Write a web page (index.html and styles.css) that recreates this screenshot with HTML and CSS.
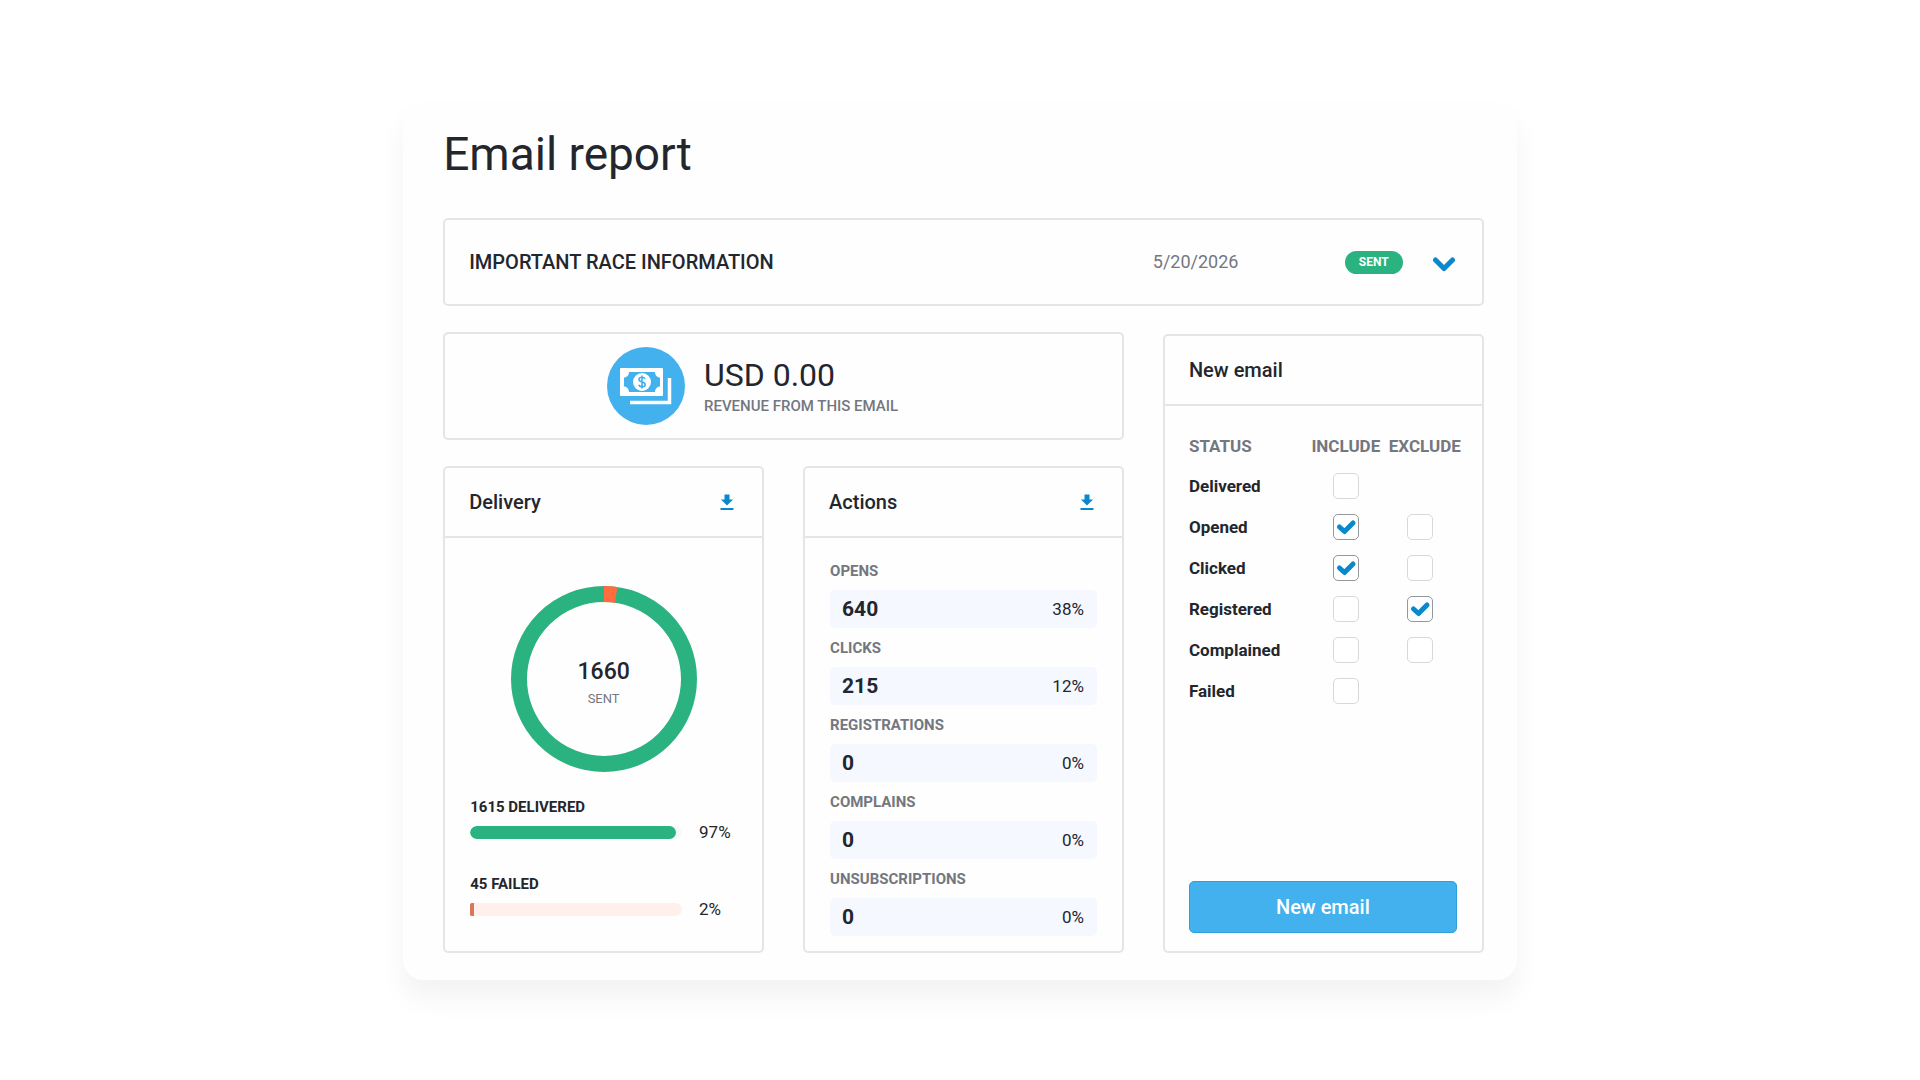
FILE: index.html
```html
<!DOCTYPE html>
<html lang="en">
<head>
<meta charset="utf-8">
<meta name="viewport" content="width=device-width, initial-scale=1">
<title>Email report</title>
<link rel="stylesheet" href="styles.css">
</head>
<body>
<svg class="defs" aria-hidden="true">
  <symbol id="download" viewBox="0 0 14 18">
    <path d="M4.5 1.5h5v5h3.6L7 12.6.9 6.500h3.600z"/>
    <path d="M.5 15h13v2H.5z"/>
  </symbol>
  <symbol id="tick" viewBox="0 0 26 26">
    <path d="M6.500 13l5 4.500 8.500-8.500" fill="none" stroke="currentColor" stroke-width="5" stroke-linecap="round" stroke-linejoin="round"/>
  </symbol>
</svg>
<main class="report">
  <h1 class="title">Email report</h1>
  <div class="grid">
    <section class="panel summary">
      <h2 class="subject">IMPORTANT RACE INFORMATION</h2>
      <time class="date" datetime="2026-05-20">5/20/2026</time>
      <span class="pill">SENT</span>
      <button class="icon-button" type="button" aria-label="Show details">
        <svg width="24" height="20" viewBox="0 0 24 20"><path d="M3.500 8L12 16.500l8.500-8.500" fill="none" stroke="currentColor" stroke-width="5" stroke-linecap="round" stroke-linejoin="round"/></svg>
      </button>
    </section>

    <section class="panel revenue">
      <svg class="money" width="78" height="78" viewBox="0 0 78 78" aria-hidden="true">
        <circle cx="39" cy="39" r="39" fill="#43b1ee"/>
        <rect x="13" y="21" width="43" height="28" rx="1" fill="#fff"/>
        <path d="M22 25h26c0 3 2 5.500 5 5.500v9c-3 0-5 2.500-5 5.500H22c0-3-2-5.500-5-5.500v-9c3 0 5-2.500 5-5.500z" fill="#43b1ee"/>
        <circle cx="35" cy="35" r="9" fill="#fff"/>
        <path d="M38 32c-.5-1.300-1.600-1.800-3-1.800-1.700 0-3 .8-3 2.200 0 3.200 6.200 1.800 6.200 5 0 1.500-1.400 2.400-3.200 2.400-1.600 0-2.800-.7-3.200-2M35 28.500v13" fill="none" stroke="#43b1ee" stroke-width="1.600"/>
        <path d="M62.500 31v24.500H23" fill="none" stroke="#fff" stroke-width="3.500"/>
      </svg>
      <div>
        <p class="amount">USD 0.00</p>
        <p class="caption">REVENUE FROM THIS EMAIL</p>
      </div>
    </section>

    <section class="panel delivery">
      <header class="head">
        <h2>Delivery</h2>
        <button class="icon-button" type="button" aria-label="Download delivery data"><svg width="14" height="18" fill="currentColor"><use href="#download"/></svg></button>
      </header>
      <div class="body">
        <div class="donut">
          <svg width="186" height="186" viewBox="0 0 186 186" aria-hidden="true">
            <circle cx="93" cy="93" r="85" fill="none" stroke="#2ab380" stroke-width="16"/>
            <circle cx="93" cy="93" r="85" fill="none" stroke="#ff6c40" stroke-width="16" pathLength="100" stroke-dasharray="2.300 97.700" transform="rotate(-90 93 93)"/>
          </svg>
          <div class="donut-text">
            <strong>1660</strong>
            <span>SENT</span>
          </div>
        </div>
        <div class="meter">
          <h3>1615 DELIVERED</h3>
          <div class="meter-row">
            <div class="track good"><div class="fill" style="width:97%"></div></div>
            <span class="percent">97%</span>
          </div>
        </div>
        <div class="meter">
          <h3>45 FAILED</h3>
          <div class="meter-row">
            <div class="track bad"><div class="fill" style="width:2%"></div></div>
            <span class="percent">2%</span>
          </div>
        </div>
      </div>
    </section>

    <section class="panel actions">
      <header class="head">
        <h2>Actions</h2>
        <button class="icon-button" type="button" aria-label="Download actions data"><svg width="14" height="18" fill="currentColor"><use href="#download"/></svg></button>
      </header>
      <dl class="body stats">
        <div><dt>OPENS</dt><dd><strong>640</strong><span>38%</span></dd></div>
        <div><dt>CLICKS</dt><dd><strong>215</strong><span>12%</span></dd></div>
        <div><dt>REGISTRATIONS</dt><dd><strong>0</strong><span>0%</span></dd></div>
        <div><dt>COMPLAINS</dt><dd><strong>0</strong><span>0%</span></dd></div>
        <div><dt>UNSUBSCRIPTIONS</dt><dd><strong>0</strong><span>0%</span></dd></div>
      </dl>
    </section>

    <form class="panel new-email">
      <header class="head"><h2>New email</h2></header>
      <div class="body">
        <table class="filters">
          <thead>
            <tr><th scope="col">STATUS</th><th scope="col" class="include">INCLUDE</th><th scope="col" class="exclude">EXCLUDE</th></tr>
          </thead>
          <tbody>
            <tr><th scope="row">Delivered</th><td><label class="check"><input type="checkbox" aria-label="Include delivered"><svg><use href="#tick"/></svg></label></td><td></td></tr>
            <tr><th scope="row">Opened</th><td><label class="check"><input type="checkbox" aria-label="Include opened" checked><svg><use href="#tick"/></svg></label></td><td><label class="check"><input type="checkbox" aria-label="Exclude opened"><svg><use href="#tick"/></svg></label></td></tr>
            <tr><th scope="row">Clicked</th><td><label class="check"><input type="checkbox" aria-label="Include clicked" checked><svg><use href="#tick"/></svg></label></td><td><label class="check"><input type="checkbox" aria-label="Exclude clicked"><svg><use href="#tick"/></svg></label></td></tr>
            <tr><th scope="row">Registered</th><td><label class="check"><input type="checkbox" aria-label="Include registered"><svg><use href="#tick"/></svg></label></td><td><label class="check"><input type="checkbox" aria-label="Exclude registered" checked><svg><use href="#tick"/></svg></label></td></tr>
            <tr><th scope="row">Complained</th><td><label class="check"><input type="checkbox" aria-label="Include complained"><svg><use href="#tick"/></svg></label></td><td><label class="check"><input type="checkbox" aria-label="Exclude complained"><svg><use href="#tick"/></svg></label></td></tr>
            <tr><th scope="row">Failed</th><td><label class="check"><input type="checkbox" aria-label="Include failed"><svg><use href="#tick"/></svg></label></td><td></td></tr>
          </tbody>
        </table>
        <button class="primary" type="button">New email</button>
      </div>
    </form>
  </div>
</main>
</body>
</html>
```
FILE: styles.css
```css
:root {
  --ink: #23262d;
  --muted: #74777e;
  --line: #e6e4e8;
  --blue: #0b88cb;
  --sky: #43b1ee;
  --green: #2ab380;
}

*, *::before, *::after { box-sizing: border-box; }

body {
  margin: 0;
  padding: 102px 0 60px;
  background: #fff;
  color: var(--ink);
  font-family: Roboto, "Liberation Sans", sans-serif;
  font-size: 17px;
  line-height: 18px;
}

h1, h2, h3, p, dl, dd { margin: 0; }
.defs { display: none; }

.report {
  width: 58%;
  min-width: 1080px;
  margin: 0 auto;
  padding: 24px 33px 27px 40px;
  border-radius: 20px;
  background: #fefefe;
  box-shadow: 0 18px 28px rgba(0, 0, 0, 0.05);
}

.title {
  margin-bottom: 36px;
  font-size: 46px;
  font-weight: 450;
  line-height: 56px;
}

.grid {
  display: grid;
  grid-template-columns: repeat(3, 1fr);
  gap: 26px 39px;
}

.panel {
  border: 2px solid var(--line);
  border-radius: 5px;
}

.icon-button {
  display: flex;
  padding: 0;
  border: 0;
  background: none;
  color: var(--blue);
}

/* Summary bar */
.summary {
  grid-column: 1 / -1;
  display: flex;
  align-items: center;
  min-height: 88px;
  padding: 0 26px 0 24px;
}
.subject {
  flex: 1;
  font-size: 20px;
  font-weight: 500;
}
.date {
  width: 192px;
  color: var(--muted);
  font-size: 18px;
}
.pill {
  width: 58px;
  margin-right: 29px;
  border-radius: 12px;
  background: var(--green);
  color: #fff;
  font-size: 12px;
  font-weight: 700;
  line-height: 23px;
  text-align: center;
}

/* Revenue */
.revenue {
  grid-column: span 2;
  display: flex;
  align-items: center;
  justify-content: center;
  gap: 19px;
  min-height: 108px;
  padding-right: 62px;
}
.amount {
  margin-bottom: 4px;
  font-size: 32px;
  line-height: 36px;
}
.caption {
  color: var(--muted);
  font-size: 15px;
  font-weight: 500;
}

/* Panel header */
.head {
  display: flex;
  align-items: center;
  justify-content: space-between;
  height: 70px;
  padding: 0 28px 0 24px;
  border-bottom: 2px solid var(--line);
}
.head h2 {
  font-size: 20px;
  font-weight: 500;
}
.body { padding: 0 25px; }

/* Delivery */
.donut {
  display: grid;
  place-items: center;
  padding-top: 48px;
}
.donut > * { grid-area: 1 / 1; }
.donut-text {
  display: grid;
  gap: 6px;
  padding-top: 9px;
  text-align: center;
}
.donut-text strong {
  font-size: 23px;
  font-weight: 500;
  line-height: 24px;
}
.donut-text span {
  color: var(--muted);
  font-size: 13px;
}
.meter { margin-top: 26px; }
.meter + .meter { margin-top: 34px; }
.meter h3 {
  margin-bottom: 7px;
  font-size: 15px;
  font-weight: 700;
}
.meter-row {
  display: flex;
  align-items: center;
  gap: 17px;
}
.track {
  flex: 1;
  height: 13px;
  border-radius: 7px;
  overflow: hidden;
}
.fill { height: 100%; }
.good { background: #f1fbf7; }
.good .fill { border-radius: 7px; background: var(--green); }
.bad { border-radius: 2px 7px 7px 2px; background: #fff0ec; }
.bad .fill { background: #d6775b; }
.percent { width: 38px; }

/* Actions */
.stats {
  display: grid;
  gap: 11px;
  padding: 24px 25px 15px;
}
.stats dt {
  margin-bottom: 10px;
  color: var(--muted);
  font-size: 15px;
  font-weight: 700;
}
.stats dd {
  display: flex;
  align-items: center;
  justify-content: space-between;
  height: 38px;
  padding: 0 13px 0 12px;
  border-radius: 5px;
  background: #f5f8fe;
}
.stats strong {
  font-size: 21px;
  font-weight: 700;
}

/* New email */
.new-email {
  grid-area: 2 / 3 / span 2;
  display: flex;
  flex-direction: column;
  margin-top: 2px;
}
.new-email .body {
  flex: 1;
  display: flex;
  flex-direction: column;
  justify-content: space-between;
  padding: 20px 25px 18px 24px;
}
.filters {
  width: 100%;
  table-layout: fixed;
  border-collapse: collapse;
}
.filters th, .filters td { padding: 0; }
.filters thead { height: 39px; }
.filters thead th {
  color: var(--muted);
  font-size: 17px;
  font-weight: 700;
}
.filters th:first-child { text-align: left; }
.filters tbody tr { height: 41px; }
.include { width: 86px; }
.exclude { width: 68px; }
.filters td:last-child { padding-right: 6px; }
.check {
  display: grid;
  width: 26px;
  height: 26px;
  margin: 0 auto;
}
.check > * { grid-area: 1 / 1; }
.check input {
  appearance: none;
  width: 26px;
  height: 26px;
  margin: 0;
  border: 1px solid #d9d7dc;
  border-radius: 5px;
  background: #fff;
}
.check input:checked { border-color: #96979c; }
.check svg {
  width: 26px;
  height: 26px;
  color: var(--blue);
  visibility: hidden;
  pointer-events: none;
}
.check input:checked + svg { visibility: visible; }
.primary {
  height: 52px;
  border: 1px solid #2f9fdc;
  border-radius: 5px;
  background: var(--sky);
  color: #fff;
  font-family: inherit;
  font-size: 20px;
  font-weight: 500;
}
```
